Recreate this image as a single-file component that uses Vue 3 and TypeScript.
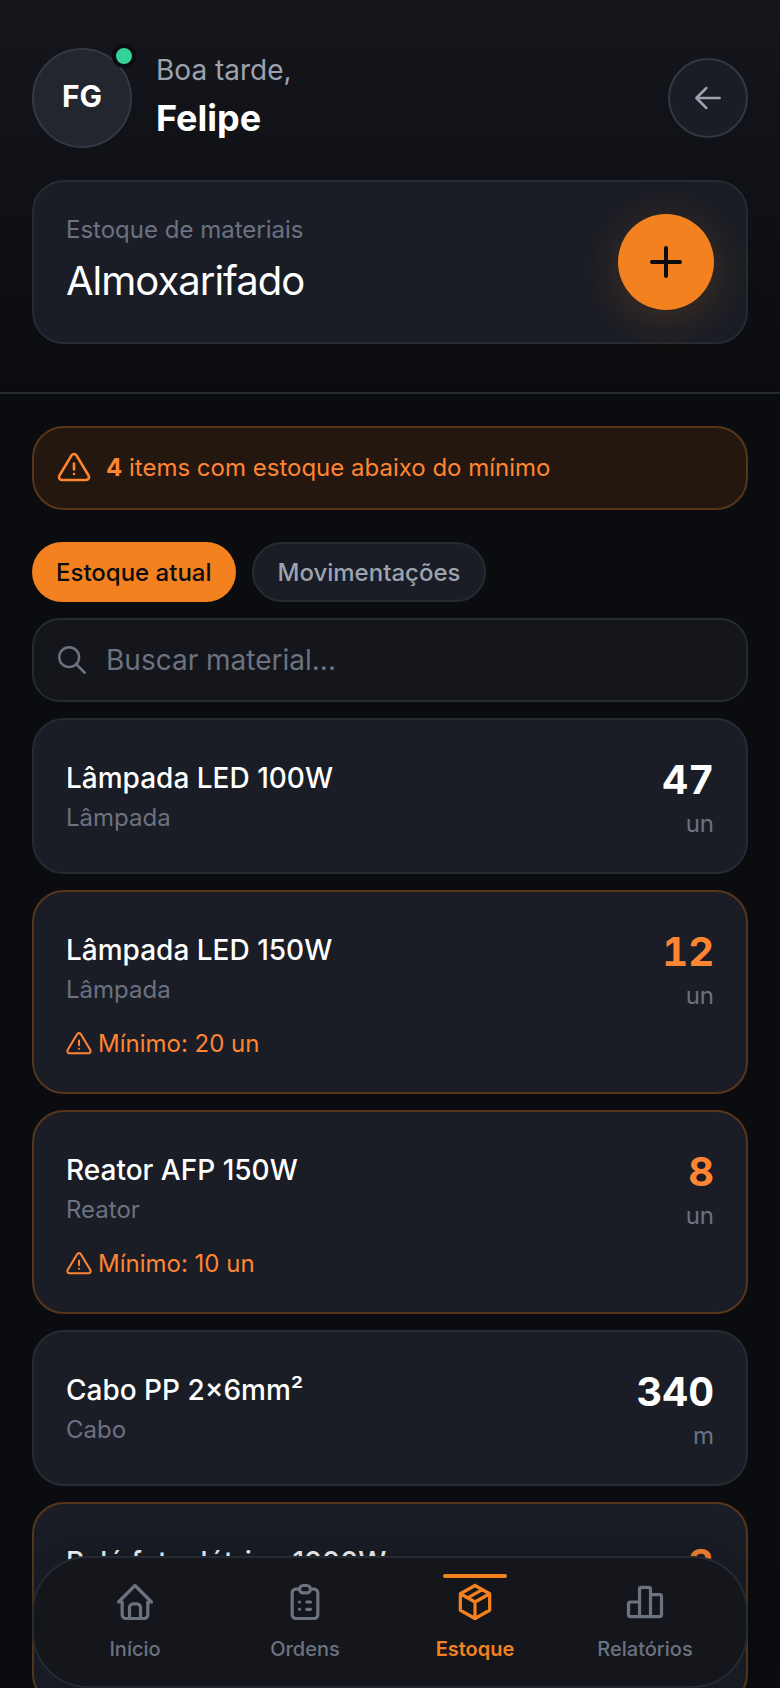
<script setup lang="ts">
interface Material {
  name: string;
  category: string;
  qty: number;
  unit: string;
  min?: number;
}

const materials: Material[] = [
  { name: "Lâmpada LED 100W", category: "Lâmpada", qty: 47, unit: "un" },
  { name: "Lâmpada LED 150W", category: "Lâmpada", qty: 12, unit: "un", min: 20 },
  { name: "Reator AFP 150W", category: "Reator", qty: 8, unit: "un", min: 10 },
  { name: "Cabo PP 2×6mm²", category: "Cabo", qty: 340, unit: "m" },
  { name: "Relé fotoelétrico 1000W", category: "Relé", qty: 3, unit: "un", min: 15 },
];

const navItems = [
  {
    label: "Início",
    d: "M5 12l-2 0l9 -9l9 9l-2 0 M5 12v7a2 2 0 0 0 2 2h10a2 2 0 0 0 2 -2v-7 M9 21v-6a2 2 0 0 1 2 -2h2a2 2 0 0 1 2 2v6",
  },
  {
    label: "Ordens",
    d: "M9 5h-2a2 2 0 0 0 -2 2v12a2 2 0 0 0 2 2h10a2 2 0 0 0 2 -2v-12a2 2 0 0 0 -2 -2h-2 M9 5a2 2 0 0 1 2 -2h2a2 2 0 0 1 2 2a2 2 0 0 1 -2 2h-2a2 2 0 0 1 -2 -2z M9 12l.01 0 M13 12l2 0 M9 16l.01 0 M13 16l2 0",
  },
  {
    label: "Estoque",
    active: true,
    d: "M12 3l8 4.5l0 9l-8 4.5l-8 -4.5l0 -9l8 -4.5 M12 12l8 -4.5 M12 12l0 9 M12 12l-8 -4.5 M16 5.25l-8 4.5",
  },
  {
    label: "Relatórios",
    d: "M3 13a1 1 0 0 1 1 -1h4a1 1 0 0 1 1 1v6a1 1 0 0 1 -1 1h-4a1 1 0 0 1 -1 -1z M15 9a1 1 0 0 1 1 -1h4a1 1 0 0 1 1 1v10a1 1 0 0 1 -1 1h-4a1 1 0 0 1 -1 -1z M9 5a1 1 0 0 1 1 -1h4a1 1 0 0 1 1 1v14a1 1 0 0 1 -1 1h-4a1 1 0 0 1 -1 -1z M4 20h14",
  },
];

const warnIcon =
  "M12 9v4 M10.363 3.591l-8.106 13.534a1.914 1.914 0 0 0 1.636 2.871h16.214a1.914 1.914 0 0 0 1.636 -2.87l-8.106 -13.536a1.914 1.914 0 0 0 -3.274 0z M12 16h.01";
</script>

<template>
  <div class="page">
    <header class="header">
      <div class="top-row">
        <div class="avatar">
          FG
          <span class="avatar__dot"></span>
        </div>
        <div class="greeting">
          <span class="greeting__hello">Boa tarde,</span>
          <span class="greeting__name">Felipe</span>
        </div>
        <button class="back">
          <svg class="icon" width="40" height="40" viewBox="0 0 24 24" stroke-width="1.5">
            <path d="M5 12l14 0 M5 12l6 6 M5 12l6 -6" />
          </svg>
        </button>
      </div>

      <div class="hero">
        <div class="hero__text">
          <span class="hero__label">Estoque de materiais</span>
          <span class="hero__title">Almoxarifado</span>
        </div>
        <button class="fab">
          <svg class="icon" width="48" height="48" viewBox="0 0 24 24" stroke-width="2">
            <path d="M12 5l0 14 M5 12l14 0" />
          </svg>
        </button>
      </div>
    </header>

    <main class="content">
      <div class="alert">
        <svg class="icon" width="36" height="36" viewBox="0 0 24 24" stroke-width="1.75">
          <path :d="warnIcon" />
        </svg>
        <span><b>4</b> items com estoque abaixo do mínimo</span>
      </div>

      <div class="tabs">
        <button class="tab tab--active">Estoque atual</button>
        <button class="tab">Movimentações</button>
      </div>

      <label class="search">
        <svg class="icon" width="34" height="34" viewBox="0 0 24 24" stroke-width="1.75">
          <path d="M3 10a7 7 0 1 0 14 0a7 7 0 1 0 -14 0 M21 21l-6 -6" />
        </svg>
        <input type="text" placeholder="Buscar material..." />
      </label>

      <div
        v-for="item in materials"
        :key="item.name"
        class="card"
        :class="{ 'card--low': item.min }"
      >
        <div class="card__row">
          <div class="card__info">
            <span class="card__name">{{ item.name }}</span>
            <span class="card__cat">{{ item.category }}</span>
          </div>
          <div class="card__stock">
            <span class="card__qty">{{ item.qty }}</span>
            <span class="card__unit">{{ item.unit }}</span>
          </div>
        </div>
        <div v-if="item.min" class="card__min">
          <svg class="icon" width="28" height="28" viewBox="0 0 24 24" stroke-width="1.75">
            <path :d="warnIcon" />
          </svg>
          Mínimo: {{ item.min }} {{ item.unit }}
        </div>
      </div>
    </main>

    <nav class="nav">
      <a
        v-for="nav in navItems"
        :key="nav.label"
        class="nav__item"
        :class="{ 'nav__item--active': nav.active }"
      >
        <span v-if="nav.active" class="nav__bar"></span>
        <svg class="icon" width="44" height="44" viewBox="0 0 24 24" stroke-width="1.75">
          <path :d="nav.d" />
        </svg>
        <span>{{ nav.label }}</span>
      </a>
    </nav>
  </div>
</template>

<style>
html,
body {
  background: #0a0c0f;
}
</style>

<style scoped>
.page {
  position: relative;
  height: 100vh;
  overflow: hidden;
  background: #0a0c0f;
  color: #fff;
  font-family: Inter, "Noto Sans", sans-serif;
}

button {
  font-family: inherit;
  cursor: pointer;
}

.icon {
  display: block;
  flex-shrink: 0;
  fill: none;
  stroke: currentColor;
  stroke-linecap: round;
  stroke-linejoin: round;
}

.header {
  display: flex;
  flex-direction: column;
  gap: 32px;
  padding: 48px 32px;
  border-bottom: 2px solid #252a33;
  background: linear-gradient(180deg, #14161c, #0a0c0f);
}

.top-row {
  display: flex;
  align-items: center;
  gap: 24px;
}

.avatar {
  position: relative;
  display: flex;
  align-items: center;
  justify-content: center;
  width: 100px;
  height: 100px;
  padding-bottom: 4px;
  border: 2px solid #323844;
  border-radius: 50%;
  background: #22262f;
  box-sizing: border-box;
  font-size: 30px;
  font-weight: 700;
}

.avatar__dot {
  position: absolute;
  top: -6px;
  right: -6px;
  width: 24px;
  height: 24px;
  border: 4px solid #0a0c0f;
  border-radius: 50%;
  background: #34d399;
  box-sizing: border-box;
}

.greeting {
  display: flex;
  flex-direction: column;
  flex: 1;
  margin-top: -2px;
}

.greeting__hello {
  font-size: 28px;
  line-height: 42px;
  color: #9ca3af;
}

.greeting__name {
  font-size: 36px;
  line-height: 54px;
  font-weight: 700;
}

.back {
  display: flex;
  align-items: center;
  justify-content: center;
  width: 80px;
  height: 80px;
  padding: 0;
  border: 2px solid #323844;
  border-radius: 50%;
  background: #1a1d25;
  color: #9ca3af;
}

.hero {
  display: flex;
  align-items: center;
  justify-content: space-between;
  padding: 32px;
  border: 2px solid #252a33;
  border-radius: 32px;
  background: #1a1d25;
}

.hero__text {
  display: flex;
  flex-direction: column;
  margin: -1px 0;
}

.hero__label {
  font-size: 24px;
  line-height: 34px;
  color: #6b7280;
}

.hero__title {
  margin-top: 4px;
  font-size: 40px;
  line-height: 60px;
  font-weight: 400;
  letter-spacing: -1px;
}

.fab {
  display: flex;
  align-items: center;
  justify-content: center;
  width: 96px;
  height: 96px;
  padding: 0;
  border: none;
  border-radius: 50%;
  background: #f48120;
  color: #0a0c0f;
  box-shadow: 0 8px 48px rgba(245, 130, 32, 0.2);
}

.content {
  display: flex;
  flex-direction: column;
  gap: 16px;
  padding: 32px;
}

.alert {
  display: flex;
  align-items: center;
  gap: 14px;
  margin-bottom: 16px;
  padding: 22px;
  border: 2px solid #57361c;
  border-radius: 32px;
  background: #24170f;
  color: #ff8533;
  font-size: 24px;
  line-height: 36px;
  font-weight: 400;
}

.alert b {
  font-weight: 700;
}

.tabs {
  display: flex;
  gap: 16px;
}

.tab {
  height: 60px;
  padding: 0 24px;
  border: 2px solid #252a33;
  border-radius: 30px;
  background: #1a1d25;
  color: #9ca3af;
  font-size: 24px;
  font-weight: 500;
}

.tab--active {
  border: none;
  background: #f48120;
  color: #0a0c0f;
}

.search {
  display: flex;
  align-items: center;
  gap: 17px;
  height: 84px;
  padding: 0 21px;
  border: 2px solid #252a33;
  border-radius: 28px;
  background: #14161c;
  color: #6b7280;
  box-sizing: border-box;
}

.search input {
  flex: 1;
  min-width: 0;
  padding: 0;
  border: none;
  outline: none;
  background: transparent;
  color: #fff;
  font-family: inherit;
  font-size: 28px;
}

.search input::placeholder {
  color: #6b7280;
  opacity: 1;
}

.card {
  flex-shrink: 0;
  padding: 28px 32px;
  border: 2px solid #252a33;
  border-radius: 32px;
  background: #1a1d25;
}

.card--low {
  border-color: #57361c;
}

.card__row {
  display: flex;
  align-items: center;
  justify-content: space-between;
  min-height: 96px;
}

.card__info {
  display: flex;
  flex-direction: column;
  gap: 1px;
}

.card__name {
  font-size: 28px;
  line-height: 42px;
  font-weight: 500;
}

.card__cat {
  font-size: 24px;
  line-height: 36px;
  color: #6b7280;
}

.card__stock {
  display: flex;
  flex-direction: column;
  align-items: flex-end;
  align-self: flex-start;
}

.card__qty {
  font-size: 40px;
  line-height: 64px;
  font-weight: 700;
  font-variant-numeric: tabular-nums;
}

.card--low .card__qty {
  color: #ff8533;
}

.card__unit {
  margin-top: -6px;
  font-size: 24px;
  line-height: 36px;
  color: #6b7280;
}

.card__min {
  display: flex;
  align-items: center;
  gap: 5px;
  margin: 10px 0 2px -1px;
  color: #ff8533;
  font-size: 24px;
  line-height: 36px;
}

.nav {
  position: absolute;
  left: 32px;
  right: 32px;
  bottom: 0;
  display: grid;
  grid-template-columns: repeat(4, 1fr);
  padding: 22px 16px 22px;
  border: 2px solid #252a33;
  border-radius: 56px;
  background: #14161c;
  box-shadow: 0 -8px 40px rgba(10, 12, 15, 0.2);
}

.nav__item {
  position: relative;
  display: flex;
  flex-direction: column;
  align-items: center;
  gap: 10px;
  color: #6b7280;
  font-size: 20px;
  line-height: 30px;
  font-weight: 500;
}

.nav__item--active {
  color: #f48120;
  font-weight: 600;
}

.nav__bar {
  position: absolute;
  top: -6px;
  left: 50%;
  width: 64px;
  height: 4px;
  border-radius: 2px;
  background: #f48120;
  transform: translateX(-50%);
}
</style>
